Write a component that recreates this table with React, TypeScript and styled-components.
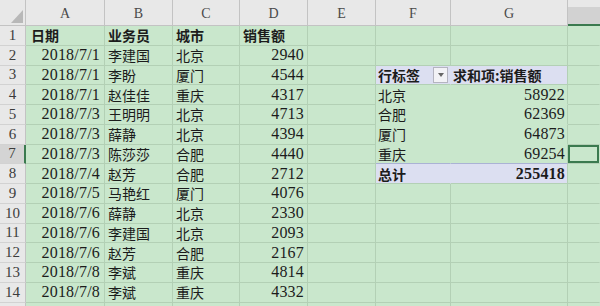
import React from "react";
import styled, { createGlobalStyle, css } from "styled-components";

const GREEN = "#c9e7cc";
const GRID = "#b3d0b5";
const HEAD_BG = "#e8e8e8";
const HEAD_LINE = "#c3c3c3";
const LAV = "#dcdff1";
const SEL = "#3b7a4f";

const Global = createGlobalStyle`
  html, body { margin: 0; padding: 0; background: ${GREEN}; overflow: hidden; }
  body { font-family: "Liberation Serif", "Noto Sans CJK SC", serif; }
`;

const Sheet = styled.div`
  display: grid;
  grid-template-columns: 26px 79px 68px 67px 68px 68px 75px 117px 1fr;
  grid-template-rows: 26px repeat(15, 19.75px);
  width: 600px;
  height: 306px;
  overflow: hidden;
  background: ${GREEN};
`;

const Corner = styled.div`
  background: ${HEAD_BG};
  border-right: 1px solid ${HEAD_LINE};
  border-bottom: 1px solid ${HEAD_LINE};
  box-sizing: border-box;
  display: flex;
  align-items: flex-end;
  justify-content: flex-end;
  padding: 0 2px 2px 0;
`;

const ColHeader = styled.div<{ $active?: boolean }>`
  box-sizing: border-box;
  background: ${HEAD_BG};
  border-right: 1px solid ${HEAD_LINE};
  border-bottom: 1px solid ${HEAD_LINE};
  display: flex;
  align-items: flex-end;
  justify-content: center;
  padding-bottom: 3px;
  font-family: "Liberation Serif", serif;
  font-size: 14px;
  color: #4a4a4a;
  ${(p) =>
    p.$active &&
    css`
      background: linear-gradient(to bottom, ${HEAD_BG} 7px, #d2d2d2 7px);
      border-bottom: 2px solid ${SEL};
      border-right: none;
    `}
`;

const RowHeader = styled.div<{ $active?: boolean }>`
  box-sizing: border-box;
  background: ${HEAD_BG};
  border-right: 1px solid ${HEAD_LINE};
  border-bottom: 1px solid #d2d2d2;
  display: flex;
  align-items: center;
  justify-content: center;
  font-family: "Liberation Serif", serif;
  font-size: 15px;
  color: #3c3c3c;
  ${(p) =>
    p.$active &&
    css`
      background: #d4d4d4;
      border-right: 2px solid ${SEL};
    `}
`;

type CellProps = {
  $align?: "left" | "right";
  $bold?: boolean;
  $num?: boolean;
  $band?: boolean;
  $noRight?: boolean;
  $noBottom?: boolean;
  $topRule?: boolean;
  $pad?: number;
  $selected?: boolean;
};

const Cell = styled.div<CellProps>`
  box-sizing: border-box;
  display: flex;
  align-items: center;
  justify-content: ${(p) => (p.$align === "right" ? "flex-end" : "flex-start")};
  padding: 0 ${(p) => (p.$align === "right" ? p.$pad ?? 3 : 2)}px 0
    ${(p) => (p.$align === "right" ? 2 : p.$pad ?? 5)}px;
  white-space: nowrap;
  overflow: hidden;
  color: #1c1c1c;
  background: ${(p) => (p.$band ? LAV : "transparent")};
  border-right: 1px solid ${(p) => (p.$noRight ? "transparent" : GRID)};
  border-bottom: 1px solid ${(p) => (p.$noBottom ? "transparent" : p.$topRule ? "#aab2d4" : GRID)};
  font-family: ${(p) =>
    p.$num ? `"Liberation Serif", serif` : `"Noto Sans CJK SC", "Liberation Sans", sans-serif`};
  font-size: ${(p) => (p.$num ? 16 : 14)}px;
  font-weight: ${(p) => (p.$bold ? 700 : 400)};
  letter-spacing: ${(p) => (p.$num ? "0.2px" : "0")};
  ${(p) =>
    p.$selected &&
    css`
      box-shadow: inset 0 0 0 2px ${SEL};
    `}
`;

const HeaderInner = styled.div`
  flex: 1;
  display: flex;
  align-items: center;
  justify-content: space-between;
`;

const DropButton = styled.span`
  width: 15px;
  height: 16px;
  box-sizing: border-box;
  border: 1px solid #b4b4c0;
  background: #f2f2f6;
  display: flex;
  align-items: center;
  justify-content: center;
`;

const Tri = () => (
  <svg width="6" height="4" viewBox="0 0 6 4">
    <path d="M0 0 L6 0 L3 4 Z" fill="#666" />
  </svg>
);

const CornerTri = () => (
  <svg width="12" height="13" viewBox="0 0 12 13">
    <path d="M12 0 L12 13 L0 13 Z" fill="#b8b8b8" />
  </svg>
);

const rows: [string, string, string, string][] = [
  ["2018/7/1", "李建国", "北京", "2940"],
  ["2018/7/1", "李盼", "厦门", "4544"],
  ["2018/7/1", "赵佳佳", "重庆", "4317"],
  ["2018/7/3", "王明明", "北京", "4713"],
  ["2018/7/3", "薛静", "北京", "4394"],
  ["2018/7/3", "陈莎莎", "合肥", "4440"],
  ["2018/7/4", "赵芳", "合肥", "2712"],
  ["2018/7/5", "马艳红", "厦门", "4076"],
  ["2018/7/6", "薛静", "北京", "2330"],
  ["2018/7/6", "李建国", "北京", "2093"],
  ["2018/7/6", "赵芳", "合肥", "2167"],
  ["2018/7/8", "李斌", "重庆", "4814"],
  ["2018/7/8", "李斌", "重庆", "4332"],
];

const pivot: Record<number, [string, string]> = {
  4: ["北京", "58922"],
  5: ["合肥", "62369"],
  6: ["厦门", "64873"],
  7: ["重庆", "69254"],
};

const cols = ["A", "B", "C", "D", "E", "F", "G", ""];

function renderPivot(r: number) {
  if (r === 3) {
    return [
      <Cell key="f" $band $bold $pad={2} $noRight>
        <HeaderInner>
          <span>行标签</span>
          <DropButton>
            <Tri />
          </DropButton>
        </HeaderInner>
      </Cell>,
      <Cell key="g" $band $bold $pad={2}>
        求和项:销售额
      </Cell>,
    ];
  }
  if (pivot[r]) {
    const [city, sum] = pivot[r];
    const last = r === 7;
    return [
      <Cell key="f" $pad={2} $noRight $noBottom={!last} $topRule={last}>
        {city}
      </Cell>,
      <Cell key="g" $num $align="right" $pad={2} $noBottom={!last} $topRule={last}>
        {sum}
      </Cell>,
    ];
  }
  if (r === 8) {
    return [
      <Cell key="f" $band $bold $pad={2} $noRight>
        总计
      </Cell>,
      <Cell key="g" $band $bold $num $align="right" $pad={2}>
        255418
      </Cell>,
    ];
  }
  return [<Cell key="f" />, <Cell key="g" />];
}

export default function App() {
  const rowNums = Array.from({ length: 15 }, (_, i) => i + 1);
  return (
    <>
      <Global />
      <Sheet>
        <Corner>
          <CornerTri />
        </Corner>
        {cols.map((c, i) => (
          <ColHeader key={i} $active={i === 7}>
            {c}
          </ColHeader>
        ))}
        {rowNums.map((r) => {
          const cells: React.ReactNode[] = [];
          cells.push(
            <RowHeader key="h" $active={r === 7}>
              {r <= 14 ? r : ""}
            </RowHeader>
          );
          if (r === 1) {
            cells.push(
              <Cell key="a" $bold>日期</Cell>,
              <Cell key="b" $bold $pad={3}>业务员</Cell>,
              <Cell key="c" $bold $pad={3}>城市</Cell>,
              <Cell key="d" $bold $pad={3}>销售额</Cell>
            );
          } else if (r <= 14) {
            const [date, name, city, amt] = rows[r - 2];
            cells.push(
              <Cell key="a" $num $align="right" $pad={4}>{date}</Cell>,
              <Cell key="b" $pad={3}>{name}</Cell>,
              <Cell key="c" $pad={3}>{city}</Cell>,
              <Cell key="d" $num $align="right" $pad={3}>{amt}</Cell>
            );
          } else {
            cells.push(<Cell key="a" />, <Cell key="b" />, <Cell key="c" />, <Cell key="d" />);
          }
          cells.push(<Cell key="e" />);
          cells.push(...renderPivot(r));
          cells.push(<Cell key="h2" $selected={r === 7} $noRight />);
          return <React.Fragment key={r}>{cells}</React.Fragment>;
        })}
      </Sheet>
    </>
  );
}
